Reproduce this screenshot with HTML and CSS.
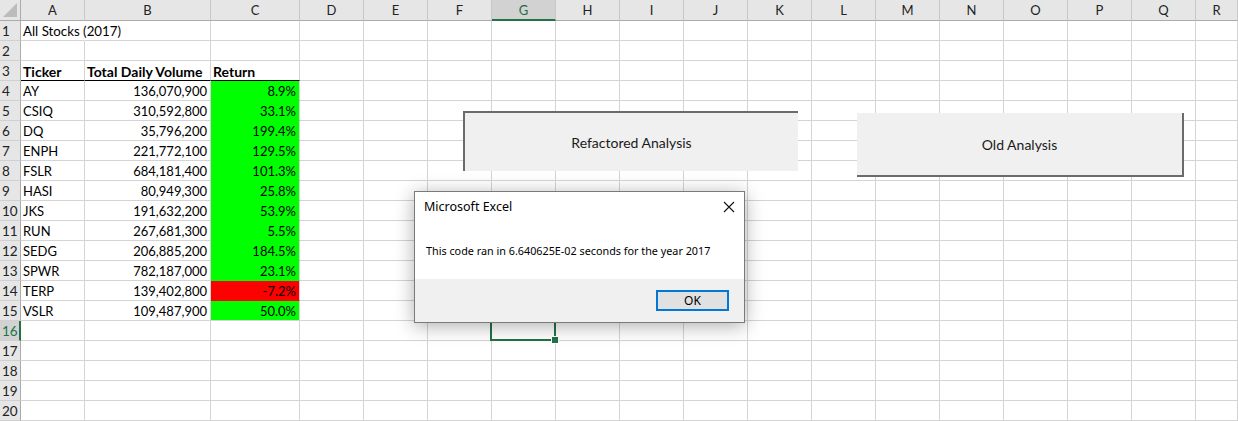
FILE: index.html
```html
<!DOCTYPE html>
<html>
<head>
<meta charset="utf-8">
<title>Excel</title>
<link rel="stylesheet" href="styles.css">
</head>
<body>
<div class="sheet">
  <div class="corner"><svg width="14" height="14" viewBox="0 0 14 14"><polygon points="14,0 14,14 0,14" fill="#bcbcbc"/></svg></div>
  <div class="ch">A</div><div class="ch">B</div><div class="ch">C</div><div class="ch">D</div><div class="ch">E</div><div class="ch">F</div><div class="ch sel">G</div><div class="ch">H</div><div class="ch">I</div><div class="ch">J</div><div class="ch">K</div><div class="ch">L</div><div class="ch">M</div><div class="ch">N</div><div class="ch">O</div><div class="ch">P</div><div class="ch">Q</div><div class="ch">R</div>

  <div class="rh">1</div><div class="c over">All Stocks (2017)</div><div class="c"></div><div class="c"></div><div class="c"></div><div class="c"></div><div class="c"></div><div class="c"></div><div class="c"></div><div class="c"></div><div class="c"></div><div class="c"></div><div class="c"></div><div class="c"></div><div class="c"></div><div class="c"></div><div class="c"></div><div class="c"></div><div class="c"></div>

  <div class="rh">2</div><div class="c"></div><div class="c"></div><div class="c"></div><div class="c"></div><div class="c"></div><div class="c"></div><div class="c"></div><div class="c"></div><div class="c"></div><div class="c"></div><div class="c"></div><div class="c"></div><div class="c"></div><div class="c"></div><div class="c"></div><div class="c"></div><div class="c"></div><div class="c"></div>

  <div class="rh">3</div><div class="c hd">Ticker</div><div class="c hd">Total Daily Volume</div><div class="c hd">Return</div><div class="c"></div><div class="c"></div><div class="c"></div><div class="c"></div><div class="c"></div><div class="c"></div><div class="c"></div><div class="c"></div><div class="c"></div><div class="c"></div><div class="c"></div><div class="c"></div><div class="c"></div><div class="c"></div><div class="c"></div>

  <div class="rh">4</div><div class="c">AY</div><div class="c n">136,070,900</div><div class="c n g">8.9%</div><div class="c"></div><div class="c"></div><div class="c"></div><div class="c"></div><div class="c"></div><div class="c"></div><div class="c"></div><div class="c"></div><div class="c"></div><div class="c"></div><div class="c"></div><div class="c"></div><div class="c"></div><div class="c"></div><div class="c"></div>

  <div class="rh">5</div><div class="c">CSIQ</div><div class="c n">310,592,800</div><div class="c n g">33.1%</div><div class="c"></div><div class="c"></div><div class="c"></div><div class="c"></div><div class="c"></div><div class="c"></div><div class="c"></div><div class="c"></div><div class="c"></div><div class="c"></div><div class="c"></div><div class="c"></div><div class="c"></div><div class="c"></div><div class="c"></div>

  <div class="rh">6</div><div class="c">DQ</div><div class="c n">35,796,200</div><div class="c n g">199.4%</div><div class="c"></div><div class="c"></div><div class="c"></div><div class="c"></div><div class="c"></div><div class="c"></div><div class="c"></div><div class="c"></div><div class="c"></div><div class="c"></div><div class="c"></div><div class="c"></div><div class="c"></div><div class="c"></div><div class="c"></div>

  <div class="rh">7</div><div class="c">ENPH</div><div class="c n">221,772,100</div><div class="c n g">129.5%</div><div class="c"></div><div class="c"></div><div class="c"></div><div class="c"></div><div class="c"></div><div class="c"></div><div class="c"></div><div class="c"></div><div class="c"></div><div class="c"></div><div class="c"></div><div class="c"></div><div class="c"></div><div class="c"></div><div class="c"></div>

  <div class="rh">8</div><div class="c">FSLR</div><div class="c n">684,181,400</div><div class="c n g">101.3%</div><div class="c"></div><div class="c"></div><div class="c"></div><div class="c"></div><div class="c"></div><div class="c"></div><div class="c"></div><div class="c"></div><div class="c"></div><div class="c"></div><div class="c"></div><div class="c"></div><div class="c"></div><div class="c"></div><div class="c"></div>

  <div class="rh">9</div><div class="c">HASI</div><div class="c n">80,949,300</div><div class="c n g">25.8%</div><div class="c"></div><div class="c"></div><div class="c"></div><div class="c"></div><div class="c"></div><div class="c"></div><div class="c"></div><div class="c"></div><div class="c"></div><div class="c"></div><div class="c"></div><div class="c"></div><div class="c"></div><div class="c"></div><div class="c"></div>

  <div class="rh">10</div><div class="c">JKS</div><div class="c n">191,632,200</div><div class="c n g">53.9%</div><div class="c"></div><div class="c"></div><div class="c"></div><div class="c"></div><div class="c"></div><div class="c"></div><div class="c"></div><div class="c"></div><div class="c"></div><div class="c"></div><div class="c"></div><div class="c"></div><div class="c"></div><div class="c"></div><div class="c"></div>

  <div class="rh">11</div><div class="c">RUN</div><div class="c n">267,681,300</div><div class="c n g">5.5%</div><div class="c"></div><div class="c"></div><div class="c"></div><div class="c"></div><div class="c"></div><div class="c"></div><div class="c"></div><div class="c"></div><div class="c"></div><div class="c"></div><div class="c"></div><div class="c"></div><div class="c"></div><div class="c"></div><div class="c"></div>

  <div class="rh">12</div><div class="c">SEDG</div><div class="c n">206,885,200</div><div class="c n g">184.5%</div><div class="c"></div><div class="c"></div><div class="c"></div><div class="c"></div><div class="c"></div><div class="c"></div><div class="c"></div><div class="c"></div><div class="c"></div><div class="c"></div><div class="c"></div><div class="c"></div><div class="c"></div><div class="c"></div><div class="c"></div>

  <div class="rh">13</div><div class="c">SPWR</div><div class="c n">782,187,000</div><div class="c n g">23.1%</div><div class="c"></div><div class="c"></div><div class="c"></div><div class="c"></div><div class="c"></div><div class="c"></div><div class="c"></div><div class="c"></div><div class="c"></div><div class="c"></div><div class="c"></div><div class="c"></div><div class="c"></div><div class="c"></div><div class="c"></div>

  <div class="rh">14</div><div class="c">TERP</div><div class="c n">139,402,800</div><div class="c n r">-7.2%</div><div class="c"></div><div class="c"></div><div class="c"></div><div class="c"></div><div class="c"></div><div class="c"></div><div class="c"></div><div class="c"></div><div class="c"></div><div class="c"></div><div class="c"></div><div class="c"></div><div class="c"></div><div class="c"></div><div class="c"></div>

  <div class="rh">15</div><div class="c">VSLR</div><div class="c n">109,487,900</div><div class="c n g last">50.0%</div><div class="c"></div><div class="c"></div><div class="c"></div><div class="c"></div><div class="c"></div><div class="c"></div><div class="c"></div><div class="c"></div><div class="c"></div><div class="c"></div><div class="c"></div><div class="c"></div><div class="c"></div><div class="c"></div><div class="c"></div>

  <div class="rh sel">16</div><div class="c"></div><div class="c"></div><div class="c"></div><div class="c"></div><div class="c"></div><div class="c"></div><div class="c cur"><span class="handle"></span></div><div class="c"></div><div class="c"></div><div class="c"></div><div class="c"></div><div class="c"></div><div class="c"></div><div class="c"></div><div class="c"></div><div class="c"></div><div class="c"></div><div class="c"></div>

  <div class="rh">17</div><div class="c"></div><div class="c"></div><div class="c"></div><div class="c"></div><div class="c"></div><div class="c"></div><div class="c"></div><div class="c"></div><div class="c"></div><div class="c"></div><div class="c"></div><div class="c"></div><div class="c"></div><div class="c"></div><div class="c"></div><div class="c"></div><div class="c"></div><div class="c"></div>

  <div class="rh">18</div><div class="c"></div><div class="c"></div><div class="c"></div><div class="c"></div><div class="c"></div><div class="c"></div><div class="c"></div><div class="c"></div><div class="c"></div><div class="c"></div><div class="c"></div><div class="c"></div><div class="c"></div><div class="c"></div><div class="c"></div><div class="c"></div><div class="c"></div><div class="c"></div>

  <div class="rh">19</div><div class="c"></div><div class="c"></div><div class="c"></div><div class="c"></div><div class="c"></div><div class="c"></div><div class="c"></div><div class="c"></div><div class="c"></div><div class="c"></div><div class="c"></div><div class="c"></div><div class="c"></div><div class="c"></div><div class="c"></div><div class="c"></div><div class="c"></div><div class="c"></div>

  <div class="rh">20</div><div class="c"></div><div class="c"></div><div class="c"></div><div class="c"></div><div class="c"></div><div class="c"></div><div class="c"></div><div class="c"></div><div class="c"></div><div class="c"></div><div class="c"></div><div class="c"></div><div class="c"></div><div class="c"></div><div class="c"></div><div class="c"></div><div class="c"></div><div class="c"></div>

  <div class="btn btn-refactored">Refactored Analysis</div>
  <div class="btn btn-old">Old Analysis</div>

  <div class="dialog">
    <div class="dlg-title">
      <span>Microsoft Excel</span>
      <svg class="dlg-close" width="12" height="12" viewBox="0 0 12 12"><path d="M1 1 L11 11 M11 1 L1 11" stroke="#111" stroke-width="1.1" fill="none"/></svg>
    </div>
    <div class="dlg-msg">This code ran in 6.640625E-02 seconds for the year 2017</div>
    <div class="dlg-foot"><div class="dlg-ok">OK</div></div>
  </div>
</div>
</body>
</html>
```

FILE: styles.css
```css
html, body {
  margin: 0;
  padding: 0;
  background: #ffffff;
}

.sheet {
  position: relative;
  display: grid;
  grid-template-columns: 21px 64px 126px 89px repeat(14, 64px) 42px;
  grid-template-rows: 21px repeat(20, 20px);
  width: 1238px;
  height: 421px;
  overflow: hidden;
  font-family: "Lato", "Liberation Sans", sans-serif;
  font-size: 13px;
  color: #000;
}

.sheet > div {
  box-sizing: border-box;
}

.corner {
  background: #e6e6e6;
  border-right: 1px solid #ababab;
  border-bottom: 1px solid #ababab;
  display: flex;
  align-items: flex-end;
  justify-content: flex-end;
  padding: 0 3px 3px 0;
}
.corner svg { display: block; }

.ch {
  background: #e6e6e6;
  border-right: 1px solid #c8c8c8;
  border-bottom: 1px solid #ababab;
  text-align: center;
  line-height: 21px;
  font-size: 13px;
  color: #222;
}
.ch.sel {
  background: #d2d2d2;
  color: #1e6b43;
  border-bottom: 2px solid #217346;
}

.rh {
  background: #e6e6e6;
  border-right: 1px solid #ababab;
  border-bottom: 1px solid #d0d0d0;
  line-height: 21px;
  font-size: 13.5px;
  color: #222;
  padding-left: 2px;
}
.rh.sel {
  background: #d2d2d2;
  color: #217346;
  border-right: 2px solid #217346;
}

.c {
  border-right: 1px solid #d4d4d4;
  border-bottom: 1px solid #d4d4d4;
  line-height: 21px;
  padding: 0 3px 0 2px;
  white-space: nowrap;
  overflow: hidden;
}
.c.over {
  overflow: visible;
  border-right-color: transparent;
  font-size: 13.3px;
}
.c.hd {
  font-weight: bold;
  font-size: 14px;
  border-bottom-color: #000;
}
.c.n { text-align: right; }
.c.g {
  background: #00ff00;
  border-bottom-color: #00ff00;
}
.c.g.last { border-bottom-color: #d4d4d4; }
.c.r {
  background: #ff0000;
  border-bottom-color: #ff0000;
}

.c.cur {
  position: relative;
  overflow: visible;
}
.c.cur::after {
  content: "";
  position: absolute;
  left: -2px;
  top: -2px;
  right: -1px;
  bottom: -1px;
  border: 2px solid #217346;
}
.handle {
  position: absolute;
  right: -4px;
  bottom: -4px;
  width: 6px;
  height: 6px;
  background: #217346;
  border: 1px solid #fff;
  z-index: 1;
}

.btn {
  position: absolute;
  box-sizing: border-box;
  background: #f0f0f0;
  display: flex;
  align-items: center;
  justify-content: center;
  font-size: 14px;
  color: #1a1a1a;
}
.btn-refactored {
  left: 463px;
  top: 111px;
  width: 335px;
  height: 60px;
  border-left: 2px solid #6b6b6b;
  border-top: 2px solid #6b6b6b;
}
.btn-old {
  left: 857px;
  top: 113px;
  width: 327px;
  height: 64px;
  border-right: 2px solid #6b6b6b;
  border-bottom: 2px solid #6b6b6b;
}

.dialog {
  position: absolute;
  left: 414px;
  top: 191px;
  width: 331px;
  height: 132px;
  box-sizing: border-box;
  border: 1px solid #7a7a7a;
  background: #fff;
  box-shadow: 0 3px 18px rgba(0, 0, 0, 0.32);
  display: flex;
  flex-direction: column;
  font-family: "Noto Sans", "Liberation Sans", sans-serif;
  font-size: 10.8px;
  color: #000;
  z-index: 5;
}
.dlg-title {
  height: 29px;
  display: flex;
  align-items: center;
  justify-content: space-between;
  padding: 0 9px 0 9px;
  font-size: 12.5px;
}
.dlg-close { display: block; }
.dlg-msg {
  flex: 1;
  display: flex;
  align-items: center;
  padding: 1px 0 0 11px;
}
.dlg-foot {
  height: 43px;
  background: #f0f0f0;
  display: flex;
  align-items: center;
  justify-content: flex-end;
  padding-right: 15px;
}
.dlg-ok {
  box-sizing: border-box;
  width: 73px;
  height: 21px;
  border: 2px solid #0078d7;
  background: #e1e1e1;
  display: flex;
  align-items: center;
  justify-content: center;
  font-size: 12px;
}
```
